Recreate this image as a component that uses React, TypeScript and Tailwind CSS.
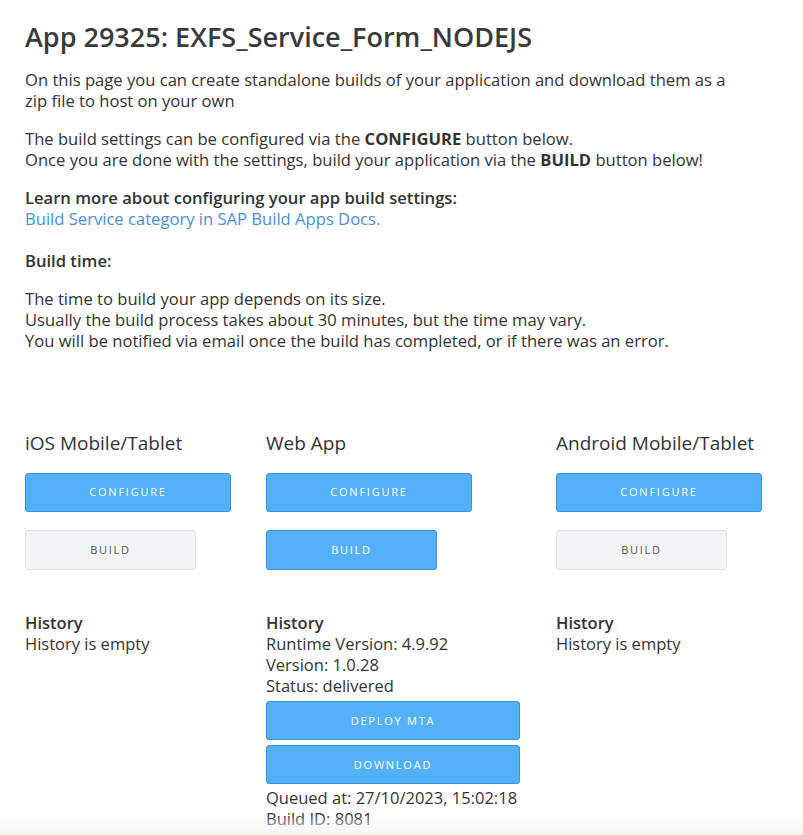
import React from "react";

const font = { fontFamily: "'Open Sans', Lato, sans-serif" };

function BlueButton({ label, w }: { label: string; w: string }) {
  return (
    <button
      className={`${w} h-[39px] rounded-[3px] border border-[#3f8fd8] bg-[#53b1fa] text-[11px] tracking-[0.16em] text-white`}
    >
      {label}
    </button>
  );
}

function GrayButton({ label }: { label: string }) {
  return (
    <button className="w-[171px] h-[40px] rounded-[3px] border border-[#e3e4e5] bg-[#f3f4f5] text-[11px] tracking-[0.16em] text-[#555]">
      {label}
    </button>
  );
}

function Column({
  title,
  w,
  webBuild,
  children,
}: {
  title: string;
  w: string;
  webBuild?: boolean;
  children: React.ReactNode;
}) {
  return (
    <div className={`${w} flex flex-col`}>
      <div className="text-[19px] leading-[26px] text-[#333] whitespace-nowrap">{title}</div>
      <div className="mt-[17px]">
        <BlueButton label="CONFIGURE" w="w-[206px]" />
      </div>
      <div className="mt-[18px]">
        {webBuild ? <BlueButton label="BUILD" w="w-[171px] h-[40px]" /> : <GrayButton label="BUILD" />}
      </div>
      <div className="mt-[42px] text-[16.5px] leading-[21px] text-[#333] whitespace-nowrap">{children}</div>
    </div>
  );
}

export default function App() {
  return (
    <div className="min-h-[835px] bg-white text-[#333] px-[25px] pt-[20px]" style={font}>
      <h1 className="text-[27px] leading-[34px] font-semibold text-[#3a3a3a]">App 29325: EXFS_Service_Form_NODEJS</h1>
      <div className="mt-[15px] text-[16.6px] leading-[21px]">
        <p>
          On this page you can create standalone builds of your application and download them as a
          <br />
          zip file to host on your own
        </p>
        <p className="mt-[17px]">
          The build settings can be configured via the <b>CONFIGURE</b> button below.
          <br />
          Once you are done with the settings, build your application via the <b>BUILD</b> button below!
        </p>
        <p className="mt-[17px]">
          <b className="font-semibold">Learn more about configuring your app build settings:</b>
          <br />
          <a className="text-[#4a8fd9]">Build Service category in SAP Build Apps Docs.</a>
        </p>
        <p className="mt-[21px]">
          <b className="font-semibold">Build time:</b>
        </p>
        <p className="mt-[17px]">
          The time to build your app depends on its size.
          <br />
          Usually the build process takes about 30 minutes, but the time may vary.
          <br />
          You will be notified via email once the build has completed, or if there was an error.
        </p>
      </div>

      <div className="mt-[79px] flex gap-[35px]">
        <Column title="iOS Mobile/Tablet" w="w-[206px]">
          <div className="font-semibold">History</div>
          <div>History is empty</div>
        </Column>
        <Column title="Web App" w="w-[255px]" webBuild>
          <div className="font-semibold">History</div>
          <div>Runtime Version: 4.9.92</div>
          <div>Version: 1.0.28</div>
          <div>Status: delivered</div>
          <div className="mt-[5px] flex flex-col gap-[5px]">
            <BlueButton label="DEPLOY MTA" w="w-[254px]" />
            <BlueButton label="DOWNLOAD" w="w-[254px]" />
          </div>
          <div className="mt-[3px]">Queued at: 27/10/2023, 15:02:18</div>
          <div>Build ID: 8081</div>
        </Column>
        <Column title="Android Mobile/Tablet" w="w-[206px]">
          <div className="font-semibold">History</div>
          <div>History is empty</div>
        </Column>
      </div>
      <div className="pointer-events-none fixed bottom-0 left-0 right-0 h-[20px] bg-gradient-to-b from-transparent to-[#f4f4f4]" />
    </div>
  );
}
